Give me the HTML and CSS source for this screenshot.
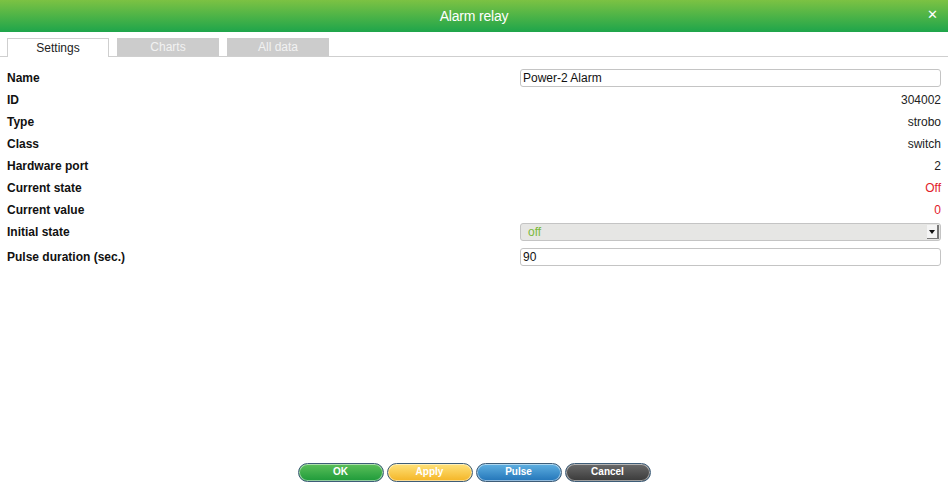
FILE: index.html
```html
<!DOCTYPE html>
<html lang="en">
<head>
<meta charset="UTF-8">
<title>Alarm relay</title>
<link rel="stylesheet" href="styles.css">
</head>
<body>
<div class="dialog">
    <div class="header">
        <span class="title">Alarm relay</span>
        <span class="close">&#x2715;</span>
    </div>

    <div class="tabs">
        <div class="tab active">Settings</div>
        <div class="tab">Charts</div>
        <div class="tab">All data</div>
    </div>

    <div class="content">
        <div class="row">
            <div class="label">Name</div>
            <div class="value"><input type="text" class="field" value="Power-2 Alarm"></div>
        </div>
        <div class="row">
            <div class="label">ID</div>
            <div class="value">304002</div>
        </div>
        <div class="row">
            <div class="label">Type</div>
            <div class="value">strobo</div>
        </div>
        <div class="row">
            <div class="label">Class</div>
            <div class="value">switch</div>
        </div>
        <div class="row">
            <div class="label">Hardware port</div>
            <div class="value">2</div>
        </div>
        <div class="row">
            <div class="label">Current state</div>
            <div class="value red">Off</div>
        </div>
        <div class="row">
            <div class="label">Current value</div>
            <div class="value red">0</div>
        </div>
        <div class="row row-select">
            <div class="label">Initial state</div>
            <div class="value">
                <div class="select">
                    <span class="select-text">off</span>
                    <span class="select-arrow"></span>
                </div>
            </div>
        </div>
        <div class="row">
            <div class="label">Pulse duration (sec.)</div>
            <div class="value"><input type="text" class="field" value="90"></div>
        </div>
    </div>

    <div class="footer">
        <button class="btn btn-ok">OK</button>
        <button class="btn btn-apply">Apply</button>
        <button class="btn btn-pulse">Pulse</button>
        <button class="btn btn-cancel">Cancel</button>
    </div>
</div>
</body>
</html>
```

FILE: styles.css
```css
body {
    margin: 0;
    padding: 0;
    font-family: "Liberation Sans", Arial, sans-serif;
    font-size: 12px;
    color: #222;
    background: #fff;
}

.dialog {
    height: 100vh;
    display: flex;
    flex-direction: column;
}

/* Barra de título */
.header {
    height: 32px;
    background: linear-gradient(to bottom, #7cc243, #1ea54b);
    display: flex;
    align-items: center;
    justify-content: center;
    position: relative;
}

.title {
    color: #fff;
    font-size: 14px;
    letter-spacing: -0.2px;
}

.close {
    position: absolute;
    right: 10px;
    top: 7px;
    color: #fff;
    font-size: 13px;
}

/* Abas */
.tabs {
    display: flex;
    gap: 8px;
    margin-top: 6px;
    padding-left: 7px;
    border-bottom: 1px solid #cfcfcf;
    height: 18px;
}

.tab {
    width: 102px;
    height: 18px;
    background-color: #cccccc;
    color: #f2f2f2;
    text-align: center;
    line-height: 18px;
    font-size: 12px;
}

.tab.active {
    background-color: #fff;
    color: #222;
    border: 1px solid #cfcfcf;
    border-bottom: none;
    box-sizing: border-box;
    height: 19px;
    margin-bottom: -1px;
}

/* Conteúdo */
.content {
    flex: 1;
    padding: 10px 7px 0 7px;
}

.row {
    display: grid;
    grid-template-columns: 1fr 421px;
    align-items: center;
    height: 22px;
}

.row-select {
    margin-bottom: 3px;
}

.label {
    font-weight: bold;
    color: #111;
}

.value {
    text-align: right;
    color: #222;
}

.red {
    color: #e2202a;
}

.field {
    display: block;
    width: 100%;
    height: 18px;
    box-sizing: border-box;
    border: 1px solid #c4c4c4;
    border-radius: 3px;
    padding: 0 2px;
    font-family: "Liberation Sans", Arial, sans-serif;
    font-size: 12px;
    color: #111;
    background: #fff;
}

.select {
    height: 18px;
    box-sizing: border-box;
    border: 1px solid #c4c4c4;
    border-radius: 3px;
    background-color: #e6e6e4;
    display: flex;
    align-items: center;
    justify-content: space-between;
    text-align: left;
}

.select-text {
    color: #7ab93b;
    padding-left: 7px;
}

.select-arrow {
    width: 12px;
    height: 14px;
    margin-right: 1px;
    background: #f4f4f4;
    border-right: 2px solid #777;
    border-bottom: 1px solid #777;
    box-sizing: border-box;
    position: relative;
}

.select-arrow::after {
    content: "";
    position: absolute;
    left: 2px;
    top: 5px;
    border-left: 3px solid transparent;
    border-right: 3px solid transparent;
    border-top: 4px solid #111;
}

/* Botões */
.footer {
    display: flex;
    justify-content: center;
    gap: 3px;
    padding-bottom: 16px;
}

.btn {
    width: 86px;
    height: 19px;
    border: 1px solid #3e5d78;
    border-radius: 10px;
    color: #fff;
    font-family: "Liberation Sans", Arial, sans-serif;
    font-weight: bold;
    font-size: 10px;
    padding: 0 0 2px 0;
    cursor: pointer;
    box-shadow: inset 0 0 0 1px rgba(255, 255, 255, 0.5);
}

.btn-ok {
    background: linear-gradient(to bottom, #5cc05a, #1e9a3a);
}

.btn-apply {
    background: linear-gradient(to bottom, #ffe27a, #f4b526);
}

.btn-pulse {
    background: linear-gradient(to bottom, #5fb0e2, #2375b8);
}

.btn-cancel {
    background: linear-gradient(to bottom, #6a6a6a, #3a3a3a);
}
```
